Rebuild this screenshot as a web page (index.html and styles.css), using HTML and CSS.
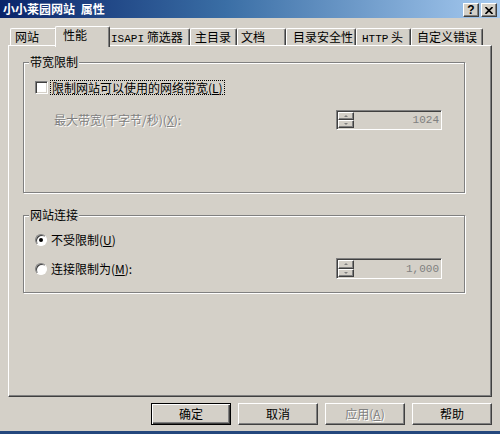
FILE: index.html
```html
<!DOCTYPE html>
<html lang="zh-CN">
<head>
  <meta charset="UTF-8" />
  <title>小小莱园网站 属性</title>
  <link rel="stylesheet" href="styles.css">
</head>
<body>
  <div class="window">
    <div class="titlebar">
      <span class="title">小小莱园网站 属性</span>
      <div class="caption-buttons">
        <span class="cap-btn cap-help">?</span>
        <span class="cap-btn">
          <svg width="8" height="7" viewBox="0 0 8 7">
            <path d="M0.5 0 L7.5 7 M7.5 0 L0.5 7" stroke="#000" stroke-width="1.6" />
          </svg>
        </span>
      </div>
    </div>

    <div class="client">
      <div class="tabs">
        <div class="tab tab-site">网站</div>
        <div class="tab tab-perf selected">性能</div>
        <div class="tab tab-isapi"><span class="mono">ISAPI</span> 筛选器</div>
        <div class="tab tab-home">主目录</div>
        <div class="tab tab-docs">文档</div>
        <div class="tab tab-sec">目录安全性</div>
        <div class="tab tab-http"><span class="mono">HTTP</span> 头</div>
        <div class="tab tab-err">自定义错误</div>
      </div>

      <div class="panel">
        <div class="group group-bw">
          <span class="group-title">带宽限制</span>
          <div class="row">
            <span class="checkbox"></span>
            <span class="focus">限制网站可以使用的网络带宽(<u>L</u>)</span>
          </div>
          <div class="row field-row">
            <span class="disabled indent">最大带宽(千字节/秒)(<u>X</u>):</span>
            <div class="spin">
              <div class="spin-btns">
                <span class="spin-btn"><i class="arrow-up"></i></span>
                <span class="spin-btn"><i class="arrow-down"></i></span>
              </div>
              <span class="spin-val">1024</span>
            </div>
          </div>
        </div>

        <div class="group group-conn">
          <span class="group-title">网站连接</span>
          <div class="row">
            <span class="radio checked"></span>
            <span class="radio-label">不受限制(<u>U</u>)</span>
          </div>
          <div class="row field-row row-limit">
            <span class="radio"></span>
            <span class="radio-label">连接限制为(<u>M</u>):</span>
            <div class="spin">
              <div class="spin-btns">
                <span class="spin-btn"><i class="arrow-up"></i></span>
                <span class="spin-btn"><i class="arrow-down"></i></span>
              </div>
              <span class="spin-val">1,000</span>
            </div>
          </div>
        </div>
      </div>

      <div class="buttons">
        <span class="btn default">确定</span>
        <span class="btn">取消</span>
        <span class="btn disabled">应用(<u>A</u>)</span>
        <span class="btn">帮助</span>
      </div>
    </div>

    <div class="bottom-edge"></div>
  </div>
</body>
</html>
```

FILE: styles.css
```css
* {
  box-sizing: border-box;
}

body {
  margin: 0;
  font-family: "Noto Sans CJK SC", "Liberation Sans", sans-serif;
  font-size: 12px;
  line-height: 14px;
  color: #000;
  background: #d4d0c8;
}

u {
  text-decoration: underline;
  text-underline-offset: 1px;
}

.window {
  width: 500px;
  height: 434px;
  display: flex;
  flex-direction: column;
  background: #d4d0c8;
  overflow: hidden;
}

/* title bar */
.titlebar {
  height: 18px;
  display: flex;
  align-items: center;
  justify-content: space-between;
  padding: 0 3px 0 3px;
  background: linear-gradient(to right, #0a246a 0%, #3a6ea5 45%, #a6caf0 100%);
}

.title {
  color: #fff;
  font-weight: bold;
  word-spacing: 3px;
}

.caption-buttons {
  display: flex;
  gap: 2px;
  margin-top: 2px;
}

.cap-btn {
  width: 16px;
  height: 14px;
  display: flex;
  align-items: center;
  justify-content: center;
  background: #d4d0c8;
  border: 1px solid;
  border-color: #fff #404040 #404040 #fff;
  box-shadow: inset -1px -1px 0 #808080;
}

.cap-help {
  font: bold 12px/12px "Liberation Sans", sans-serif;
}

/* tabs */
.client {
  padding: 0 8px;
}

.tabs {
  margin-top: 8px;
  height: 19px;
  display: flex;
  align-items: flex-end;
  padding-left: 2px;
}

.tab {
  height: 17px;
  padding-top: 1px;
  white-space: nowrap;
  background: #d4d0c8;
  border-top: 1px solid #fff;
  border-left: 1px solid #fff;
  border-right: 1px solid #404040;
  border-radius: 2px 2px 0 0;
  box-shadow: inset -1px 0 0 #808080;
}

.tab.selected {
  position: relative;
  z-index: 1;
  height: 21px;
  margin: 0 -2px -2px -2px;
}

.mono {
  font-family: "Liberation Mono", monospace;
  font-size: 11px;
}

.tab-site  { width: 47px; padding-left: 4px; }
.tab-perf  { width: 55px; padding-left: 7px; }
.tab-isapi { width: 82px; padding-left: 2px; }
.tab-home  { width: 47px; padding-left: 4px; }
.tab-docs  { width: 49px; padding-left: 3px; }
.tab-sec   { width: 70px; padding-left: 6px; }
.tab-http  { width: 55px; padding-left: 5px; }
.tab-err   { width: 72px; padding-left: 5px; }

/* tab page */
.panel {
  height: 352px;
  padding: 16px 0 0 14px;
  border: 1px solid;
  border-color: #fff #404040 #404040 #fff;
  box-shadow: inset -1px -1px 0 #808080;
}

.group {
  position: relative;
  width: 442px;
  border: 1px solid #808080;
  box-shadow: inset 1px 1px 0 #fff, 1px 1px 0 #fff;
  padding: 17px 22px 0 11px;
}

.group-bw {
  height: 131px;
}

.group-conn {
  height: 78px;
  margin-top: 22px;
}

.group-title {
  position: absolute;
  top: -8px;
  left: 5px;
  padding: 0 1px;
  background: #d4d0c8;
}

.row {
  display: flex;
  align-items: center;
  height: 14px;
}

.field-row {
  height: 20px;
  margin-top: 16px;
}

.row-limit {
  height: 21px;
  margin-top: 11px;
}

.checkbox {
  width: 13px;
  height: 13px;
  background: #fff;
  border: 1px solid;
  border-color: #808080 #fff #fff #808080;
  box-shadow: inset 1px 1px 0 #404040, inset -1px -1px 0 #d4d0c8;
}

.focus {
  margin-left: 2px;
  padding: 0 1px;
  line-height: 13px;
  border: 1px dotted #000;
}

.disabled {
  color: #808080;
  text-shadow: 1px 1px 0 #fff;
}

.indent {
  padding-left: 19px;
}

.radio {
  width: 12px;
  height: 12px;
  display: flex;
  align-items: center;
  justify-content: center;
  border-radius: 50%;
  background: #fff;
  border: 1px solid;
  border-color: #808080 #fff #fff #808080;
  box-shadow: inset 1px 1px 0 #404040, 0 0 0 0.5px #d4d0c8;
}

.radio.checked::after {
  content: "";
  width: 4px;
  height: 4px;
  border-radius: 50%;
  background: #000;
}

.radio-label {
  margin-left: 4px;
}

/* spinner */
.spin {
  margin-left: auto;
  width: 106px;
  height: 20px;
  display: flex;
  align-items: center;
  background: #d4d0c8;
  border: 1px solid;
  border-color: #808080 #fff #fff #808080;
  box-shadow: inset 1px 1px 0 #404040, inset -1px -1px 0 #d4d0c8;
  padding: 1px 2px 1px 1px;
}

.row-limit .spin {
  height: 21px;
}

.spin-btns {
  width: 16px;
  height: 100%;
  display: flex;
  flex-direction: column;
}

.spin-btn {
  flex: 1;
  display: flex;
  align-items: center;
  justify-content: center;
  background: #d4d0c8;
  border: 1px solid;
  border-color: #fff #404040 #404040 #fff;
  box-shadow: inset -1px -1px 0 #808080;
}

.arrow-up,
.arrow-down {
  width: 0;
  height: 0;
  border-left: 2px solid transparent;
  border-right: 2px solid transparent;
}

.arrow-up {
  border-bottom: 2px solid #808080;
}

.arrow-down {
  border-top: 2px solid #808080;
}

.spin-val {
  margin-left: auto;
  color: #808080;
  font-family: "Liberation Mono", monospace;
  font-size: 11px;
}

/* dialog buttons */
.buttons {
  margin-top: 6px;
  display: flex;
  justify-content: flex-end;
  gap: 7px;
}

.btn {
  width: 80px;
  height: 22px;
  display: flex;
  align-items: center;
  justify-content: center;
  background: #d4d0c8;
  border: 1px solid;
  border-color: #fff #404040 #404040 #fff;
  box-shadow: inset -1px -1px 0 #808080;
}

.btn.default {
  border-color: #000;
  box-shadow: inset 1px 1px 0 #fff, inset -1px -1px 0 #404040, inset -2px -2px 0 #808080;
}

.bottom-edge {
  margin-top: auto;
  height: 3px;
  background: #24477d;
}
```
